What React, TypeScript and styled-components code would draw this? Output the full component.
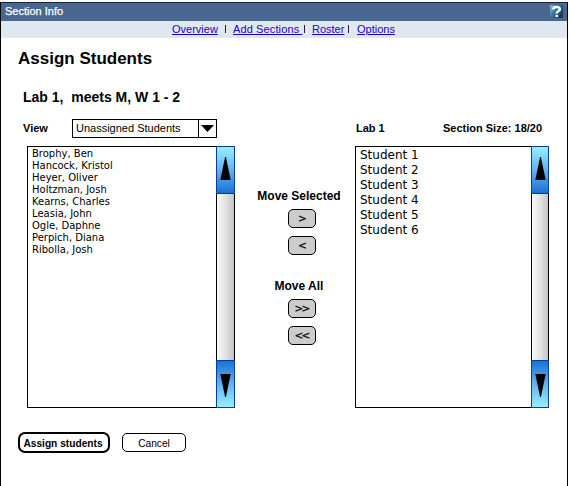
import React from "react";
import styled, { createGlobalStyle } from "styled-components";

const GlobalStyle = createGlobalStyle`
  * { box-sizing: border-box; }
  body { margin: 0; background: #fff; color: #000; overflow: hidden; font-family: "Liberation Sans", Arial, sans-serif; }
`;

const Window = styled.div`
  width: 568px;
  height: 484px;
  margin-top: 2px;
  border: 1px solid #000;
  border-bottom: 0;
  border-top-color: #1c2230;
`;

const TitleBar = styled.header`
  height: 18px;
  display: flex;
  justify-content: space-between;
  align-items: center;
  padding: 0 4px 2px;
  background: #4a678f;
  color: #fff;
  font-size: 11px;
  line-height: 16px;
  -webkit-text-stroke: 0.25px #fff;
`;

const HelpIcon = styled.svg`
  display: block;
  width: 13px;
  height: 13px;
`;

const Nav = styled.nav`
  height: 17px;
  padding-left: 171px;
  display: flex;
  align-items: center;
  background: #dfe8f0;
  font-size: 11px;
  line-height: 17px;
  white-space: pre;
`;

const NavLink = styled.a<{ $width: number; $spacing?: number }>`
  width: ${(p) => p.$width}px;
  flex: none;
  color: #1b00d8;
  text-decoration: underline;
  letter-spacing: ${(p) => p.$spacing ?? 0}px;
`;

const Divider = styled.span<{ $before: number; $after: number }>`
  width: 1px;
  height: 8px;
  margin: 0 ${(p) => p.$after}px 1px ${(p) => p.$before}px;
  background: #222;
`;

const Title = styled.h1`
  margin: 9px 0 0 17px;
  font-size: 17px;
  line-height: 24px;
  white-space: pre;
`;

const Subtitle = styled.h2`
  margin: 17px 0 0 22px;
  font-size: 14px;
  line-height: 18px;
  white-space: pre;
`;

const Controls = styled.div`
  display: flex;
  align-items: center;
  height: 19px;
  margin: 13px 0 0 22px;
`;

const Label = styled.span<{ $width: number }>`
  width: ${(p) => p.$width}px;
  flex: none;
  font-size: 11px;
  font-weight: bold;
  line-height: 17px;
  white-space: nowrap;
`;

const Dropdown = styled.div`
  width: 145px;
  height: 19px;
  margin-right: 139px;
  display: flex;
  border: 1px solid #000;
  font-size: 11px;
  line-height: 17px;
`;

const DropdownValue = styled.span`
  flex: 1;
  padding-left: 3px;
  white-space: nowrap;
`;

const DropdownArrow = styled.span`
  width: 18px;
  display: grid;
  place-items: center;
  border-left: 1px solid #000;
`;

const Transfer = styled.main`
  display: flex;
  margin: 8px 0 0 26px;
  height: 262px;
`;

const ListBox = styled.section<{ $width: number }>`
  width: ${(p) => p.$width}px;
  display: flex;
`;

const Names = styled.ul<{ $large?: boolean }>`
  flex: 1;
  margin: 0;
  padding: 1px 0 0 4px;
  list-style: none;
  border: 1px solid #000;
  border-right: 0;
  font-family: "DejaVu Sans", Verdana, sans-serif;
  font-size: ${(p) => (p.$large ? 12 : 10)}px;
  line-height: ${(p) => (p.$large ? 15 : 12)}px;
`;

const Scrollbar = styled.div<{ $width: number }>`
  width: ${(p) => p.$width}px;
  display: flex;
  flex-direction: column;
`;

const ScrollButton = styled.div<{ $down?: boolean }>`
  height: 48px;
  display: grid;
  justify-items: center;
  align-content: start;
  padding-top: ${(p) => (p.$down ? 13 : 10)}px;
  border: 1px solid #083d91;
  background: linear-gradient(
    ${(p) => (p.$down ? "to top" : "to bottom")},
    #98eeff 0%, #62b7f2 48%, #1970d5 100%
  );
`;

const Track = styled.div`
  flex: 1;
  border: solid #000;
  border-width: 0 1px;
  background: linear-gradient(to right, #fafafa, #e5e5e5 45%, #c4c4c4);
`;

const Moves = styled.aside<{ $width: number }>`
  width: ${(p) => p.$width}px;
  display: flex;
  flex-direction: column;
  align-items: center;
  padding: 43px 0 0 13px;
`;

const MoveLabel = styled.div<{ $spaced?: boolean }>`
  width: 90px;
  margin: ${(p) => (p.$spaced ? "16px 0 5px" : "0 0 5px")};
  padding-right: 5px;
  text-align: center;
  font-size: 12px;
  font-weight: bold;
  line-height: 15px;
  white-space: nowrap;
`;

const MoveButton = styled.button`
  width: 28px;
  height: 19px;
  flex: none;
  margin: 0 0 8px;
  padding: 0;
  display: grid;
  place-items: center;
  border: 1px solid #000;
  border-radius: 5px;
  background: #ccc;
  color: #000;
  font: 10.5px/17px "DejaVu Sans", Verdana, sans-serif;
  letter-spacing: -1.8px;
  -webkit-text-stroke: 0.2px #000;
`;

const Footer = styled.footer`
  display: flex;
  align-items: center;
  gap: 12px;
  margin: 24px 0 0 17px;
`;

const Action = styled.button<{ $primary?: boolean }>`
  width: ${(p) => (p.$primary ? 92 : 64)}px;
  height: ${(p) => (p.$primary ? 21 : 19)}px;
  padding: ${(p) => (p.$primary ? "1px 2px 0 0" : "2px 0 0")};
  border: ${(p) => (p.$primary ? 2 : 1)}px solid #000;
  border-radius: ${(p) => (p.$primary ? 7 : 5)}px;
  background: #fff;
  color: #000;
  font-family: "Liberation Sans", Arial, sans-serif;
  font-size: 10.2px;
  font-weight: ${(p) => (p.$primary ? "bold" : "normal")};
  line-height: 15px;
  white-space: nowrap;
`;

function Arrow({ down }: { down?: boolean }) {
  return (
    <svg width="11" height="24" viewBox="0 0 11 24">
      <path d={down ? "M.3 0h10.4L5.9 23h-.8Z" : "M5.1 0h.8l4.8 23H.3Z"} />
    </svg>
  );
}

function StudentList({ names, large, width, barWidth }: { names: string[]; large?: boolean; width: number; barWidth: number }) {
  return (
    <ListBox $width={width}>
      <Names $large={large}>
        {names.map((name) => <li key={name}>{name}</li>)}
      </Names>
      <Scrollbar $width={barWidth}>
        <ScrollButton><Arrow /></ScrollButton>
        <Track />
        <ScrollButton $down><Arrow down /></ScrollButton>
      </Scrollbar>
    </ListBox>
  );
}

const unassigned = [
  "Brophy, Ben", "Hancock, Kristol", "Heyer, Oliver", "Holtzman, Josh", "Kearns, Charles",
  "Leasia, John", "Ogle, Daphne", "Perpich, Diana", "Ribolla, Josh",
];
const assigned = ["Student 1", "Student 2", "Student 3", "Student 4", "Student 5", "Student 6"];

export default function App() {
  return (
    <>
      <GlobalStyle />
      <Window>
        <TitleBar>
          Section Info
          <HelpIcon viewBox="0 0 13 13">
            <defs>
              <linearGradient id="help" x2="1" y2="0.6">
                <stop stopColor="#8fc0dc" />
                <stop offset=".45" stopColor="#3a7ba3" />
                <stop offset="1" stopColor="#123c5c" />
              </linearGradient>
            </defs>
            <path fill="url(#help)" d="M0 0h13v13H0z" />
            <path fill="none" stroke="#fff" strokeWidth="2.4" d="M3.2 4.4C3.2 1.2 10 1.1 10 4.2 10 6 6.7 5.9 6.7 8.5M6.7 9.8v2.3" />
          </HelpIcon>
        </TitleBar>
        <Nav>
          <NavLink $width={46}>Overview</NavLink>
          <Divider $before={7} $after={7} />
          <NavLink $width={70} $spacing={0.12}>{"Add Sections "}</NavLink>
          <Divider $before={1} $after={7} />
          <NavLink $width={32}>Roster</NavLink>
          <Divider $before={4} $after={8} />
          <NavLink $width={38}>Options</NavLink>
        </Nav>
        <Title>Assign Students</Title>
        <Subtitle>{"Lab 1,  meets M, W 1 - 2"}</Subtitle>
        <Controls>
          <Label $width={49}>View</Label>
          <Dropdown>
            <DropdownValue>Unassigned Students</DropdownValue>
            <DropdownArrow>
              <svg width="13" height="7" viewBox="0 0 13 7"><path d="M0 0h13L6.5 7Z" /></svg>
            </DropdownArrow>
          </Dropdown>
          <Label $width={87}>Lab 1</Label>
          <Label $width={104}>Section Size: 18/20</Label>
        </Controls>
        <Transfer>
          <StudentList names={unassigned} width={208} barWidth={19} />
          <Moves $width={120}>
            <MoveLabel>Move Selected</MoveLabel>
            <MoveButton>&gt;</MoveButton>
            <MoveButton>&lt;</MoveButton>
            <MoveLabel $spaced>Move All</MoveLabel>
            <MoveButton>&gt;&gt;</MoveButton>
            <MoveButton>&lt;&lt;</MoveButton>
          </Moves>
          <StudentList names={assigned} large width={194} barWidth={18} />
        </Transfer>
        <Footer>
          <Action $primary>Assign students</Action>
          <Action>Cancel</Action>
        </Footer>
      </Window>
    </>
  );
}
